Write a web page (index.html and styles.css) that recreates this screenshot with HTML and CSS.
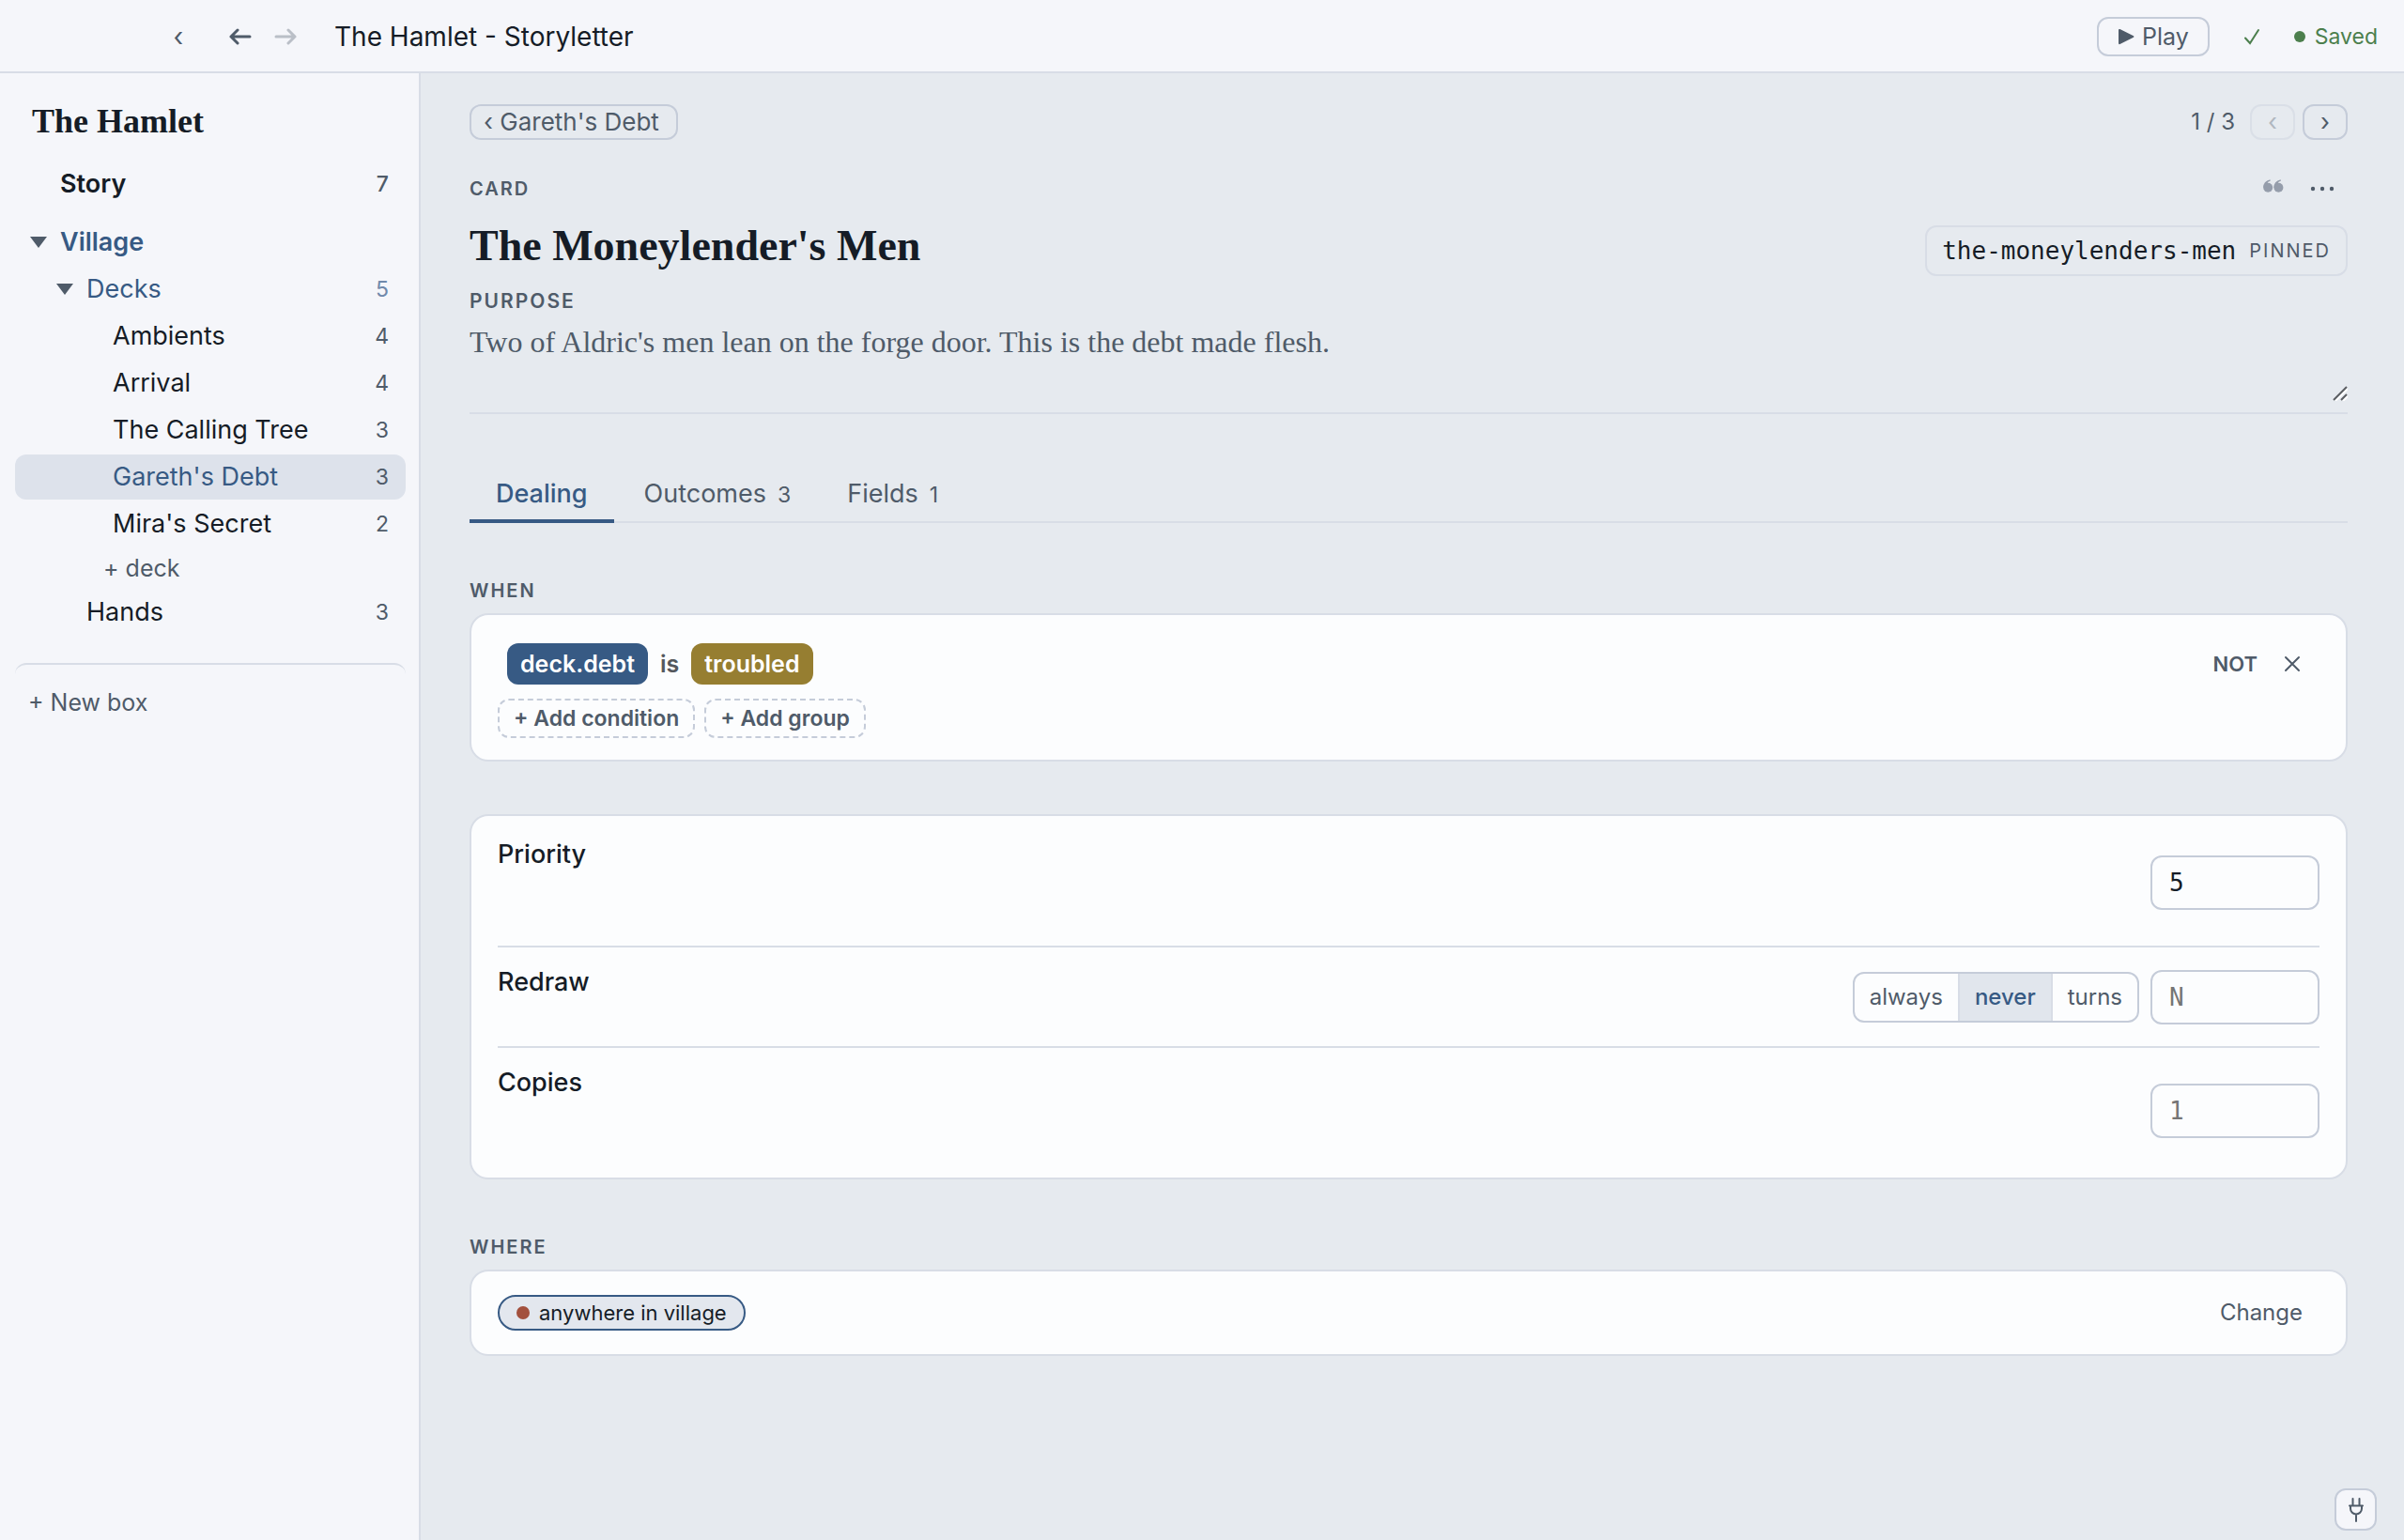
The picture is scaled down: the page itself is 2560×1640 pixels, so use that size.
FILE: index.html
```html
<!DOCTYPE html>
<html lang="en">
<head>
<meta charset="utf-8">
<title>The Hamlet - Storyletter</title>
<meta name="viewport" content="width=device-width, initial-scale=1">
<link rel="stylesheet" href="styles.css">
</head>
<body>
<div class="app">
  <header class="topbar">
    <button class="icon-button collapse" type="button" aria-label="Collapse sidebar">‹</button>
    <button class="icon-button history" type="button" aria-label="Back">
      <svg width="24" height="20" viewBox="0 0 24 20" class="stroke-icon"><path d="M22 10H2M9 3L2 10l7 7"/></svg>
    </button>
    <button class="icon-button history" type="button" aria-label="Forward" disabled>
      <svg width="24" height="20" viewBox="0 0 24 20" class="stroke-icon"><path d="M2 10h20M15 3l7 7-7 7"/></svg>
    </button>
    <span class="window-title">The Hamlet - Storyletter</span>
    <button class="play" type="button">
      <svg width="18" height="18" viewBox="0 0 18 18" fill="currentColor"><path d="M1 2q0-1.500 1.500-1L17 8.200q1 .8 0 1.600L2.500 17Q1 17.500 1 16z"/></svg>
      Play
    </button>
    <svg class="check" width="18" height="18" viewBox="0 0 18 18"><path d="M2 10.500l5 5.500L16 2"/></svg>
    <span class="saved"><span class="saved-dot"></span>Saved</span>
  </header>

  <nav class="sidebar" aria-label="Story outline">
    <h1 class="story-name">The Hamlet</h1>
    <ul class="tree">
      <li><a class="row story" href="#story"><span class="caret-slot"></span><span class="name">Story</span><span class="count">7</span></a></li>
      <li><a class="row box" href="#village"><svg class="caret-slot" width="18" height="14" viewBox="0 0 18 14"><path d="M0 1h18L9 13z"/></svg><span class="name">Village</span></a></li>
      <li><a class="row level-1 open" href="#decks"><svg class="caret-slot" width="18" height="14" viewBox="0 0 18 14"><path d="M0 1h18L9 13z"/></svg><span class="name">Decks</span><span class="count">5</span></a></li>
      <li><a class="row level-2" href="#ambients"><span class="caret-slot"></span><span class="name">Ambients</span><span class="count">4</span></a></li>
      <li><a class="row level-2" href="#arrival"><span class="caret-slot"></span><span class="name">Arrival</span><span class="count">4</span></a></li>
      <li><a class="row level-2" href="#calling-tree"><span class="caret-slot"></span><span class="name">The Calling Tree</span><span class="count">3</span></a></li>
      <li><a class="row level-2 selected" href="#gareths-debt" aria-current="page"><span class="caret-slot"></span><span class="name">Gareth's Debt</span><span class="count">3</span></a></li>
      <li><a class="row level-2" href="#miras-secret"><span class="caret-slot"></span><span class="name">Mira's Secret</span><span class="count">2</span></a></li>
      <li><button class="add-deck" type="button">+ deck</button></li>
      <li><a class="row level-1" href="#hands"><span class="caret-slot"></span><span class="name">Hands</span><span class="count">3</span></a></li>
    </ul>
    <button class="new-box" type="button">+ New box</button>
  </nav>

  <main class="editor">
    <div class="crumbs">
      <a class="back" href="#gareths-debt">‹ Gareth's Debt</a>
      <span class="position">1 / 3</span>
      <button class="step" type="button" aria-label="Previous card" disabled>‹</button>
      <button class="step" type="button" aria-label="Next card">›</button>
    </div>

    <div class="kind">
      <span class="label">Card</span>
      <span class="kind-actions">
        <button class="icon-button quote" type="button" aria-label="Notes">
          <svg width="22" height="20" viewBox="0 0 22 20" fill="currentColor"><circle cx="5.200" cy="8.800" r="5"/><circle cx="16.400" cy="8.800" r="5"/><path d="M.2 9Q0 1.800 7.400.2L7.800 1.600Q4.500 2.600 4.200 5zM11.400 9Q11.200 1.800 18.600.2L19 1.600Q15.700 2.600 15.400 5z"/></svg>
        </button>
        <button class="icon-button" type="button" aria-label="More actions">
          <svg width="26" height="6" viewBox="0 0 26 6" fill="currentColor"><circle cx="3" cy="3" r="2.200"/><circle cx="13" cy="3" r="2.200"/><circle cx="23" cy="3" r="2.200"/></svg>
        </button>
      </span>
    </div>

    <div class="title-row">
      <h2 class="card-title">The Moneylender's Men</h2>
      <div class="slug"><code>the-moneylenders-men</code><span class="pinned">Pinned</span></div>
    </div>

    <div class="purpose">
      <label class="label" for="purpose">Purpose</label>
      <div class="purpose-field">
        <textarea id="purpose" rows="2">Two of Aldric's men lean on the forge door. This is the debt made flesh.</textarea>
        <svg class="grip" width="16" height="16" viewBox="0 0 16 16"><path class="grip-light" d="M3 16L16 3M11 16l5-5"/><path d="M1 15L15 1M9 15l6-6"/></svg>
      </div>
    </div>

    <div class="tabs" role="tablist">
      <button class="tab active" type="button" role="tab" aria-selected="true">Dealing</button>
      <button class="tab" type="button" role="tab" aria-selected="false">Outcomes<span class="tab-count">3</span></button>
      <button class="tab" type="button" role="tab" aria-selected="false">Fields<span class="tab-count">1</span></button>
    </div>

    <section class="section">
      <h3 class="label">When</h3>
      <div class="panel when">
        <div class="condition">
          <button class="chip key" type="button">deck.debt</button>
          <span class="operator">is</span>
          <button class="chip value" type="button">troubled</button>
          <button class="negate" type="button">NOT</button>
          <button class="icon-button remove" type="button" aria-label="Remove condition">
            <svg width="18" height="18" viewBox="0 0 18 18" class="stroke-icon thin"><path d="M2 2l14 14M16 2L2 16"/></svg>
          </button>
        </div>
        <div class="adders">
          <button class="adder" type="button">+ Add condition</button>
          <button class="adder" type="button">+ Add group</button>
        </div>
      </div>
    </section>

    <section class="panel settings">
      <div class="setting tall">
        <label class="setting-name" for="priority">Priority</label>
        <div class="controls"><input id="priority" class="number" type="text" value="5"></div>
      </div>
      <div class="setting">
        <label class="setting-name" for="redraw">Redraw</label>
        <div class="controls">
          <div class="segments" role="group" aria-label="Redraw">
            <button type="button">always</button>
            <button class="on" type="button" aria-pressed="true">never</button>
            <button type="button">turns</button>
          </div>
          <input id="redraw" class="number" type="text" placeholder="N">
        </div>
      </div>
      <div class="setting tall">
        <label class="setting-name" for="copies">Copies</label>
        <div class="controls"><input id="copies" class="number" type="text" placeholder="1"></div>
      </div>
    </section>

    <section class="section">
      <h3 class="label">Where</h3>
      <div class="panel where">
        <span class="place"><span class="place-dot"></span>anywhere in village</span>
        <button class="change" type="button">Change</button>
      </div>
    </section>
  </main>

  <button class="plug" type="button" aria-label="Connections">
    <svg width="16" height="26" viewBox="0 0 16 26" class="stroke-icon"><path d="M4.500 1v7M11.500 1v7M1 8.500h14M2 8.500v3a6 6 0 0 0 12 0v-3M8 17.500V25"/></svg>
  </button>
</div>
</body>
</html>
```

FILE: styles.css
```css
:root {
  --ink: #151c26;
  --muted: #4f5b69;
  --blue: #375a84;
  --surface: #f5f6fa;
  --canvas: #e6eaef;
  --panel: #fcfdfe;
  --line: #d8dde6;
  --line-strong: #c5ccd9;
}

* {
  box-sizing: border-box;
}

body {
  margin: 0;
  background: var(--canvas);
  color: var(--ink);
  font: 26px/32px Inter, "Liberation Sans", sans-serif;
}

button,
input,
textarea {
  margin: 0;
  padding: 0;
  border: 0;
  background: none;
  color: inherit;
  font: inherit;
}

a {
  color: inherit;
  text-decoration: none;
}

.app {
  display: grid;
  grid-template-columns: 448px 1fr;
  grid-template-rows: auto 1fr;
  min-height: 100vh;
}

.stroke-icon {
  fill: none;
  stroke: currentColor;
  stroke-width: 3;
  stroke-linecap: round;
  stroke-linejoin: round;
}

.stroke-icon.thin {
  stroke-width: 2;
}

.icon-button {
  display: flex;
  align-items: center;
  justify-content: center;
  color: var(--muted);
}

/* Top bar */

.topbar {
  grid-column: 1 / -1;
  display: flex;
  align-items: center;
  height: 78px;
  padding: 2px 28px 0 168px;
  background: var(--surface);
  border-bottom: 2px solid var(--line);
}

.collapse {
  width: 44px;
  margin-right: 20px;
  font-size: 28px;
}

.history {
  width: 48px;
}

.history:disabled {
  opacity: 0.35;
}

.window-title {
  margin-left: 28px;
  font-size: 28px;
}

.play {
  display: flex;
  align-items: center;
  gap: 8px;
  height: 42px;
  margin-left: auto;
  padding: 0 20px;
  border: 2px solid var(--line-strong);
  border-radius: 12px;
  color: var(--muted);
  font-size: 25px;
}

.check {
  margin: 0 36px;
  fill: none;
  stroke: #4c7f4d;
  stroke-width: 2;
  stroke-linecap: round;
}

.saved {
  display: flex;
  align-items: center;
  gap: 10px;
  color: #4c7f4d;
  font-size: 23px;
}

.saved-dot {
  width: 12px;
  height: 12px;
  border-radius: 50%;
  background: #4c7f4d;
}

/* Sidebar */

.sidebar {
  padding: 30px 14px 32px 16px;
  background: var(--surface);
  border-right: 2px solid var(--line);
}

.story-name {
  margin: 0 0 22px;
  padding-left: 18px;
  font: bold 36px/42px "Liberation Serif", serif;
}

.tree {
  display: flex;
  flex-direction: column;
  gap: 2px;
  margin: 0;
  padding: 0;
  list-style: none;
}

.row {
  display: flex;
  align-items: center;
  height: 48px;
  padding: 0 18px 0 16px;
  border-radius: 12px;
  font-size: 27px;
}

.caret-slot {
  width: 18px;
  margin-right: 14px;
  fill: var(--muted);
}

.name {
  flex: 1;
}

.count {
  color: var(--muted);
  font-size: 23px;
}

.story {
  margin-bottom: 12px;
  font-weight: 600;
}

.story .count {
  font-weight: 500;
}

.box {
  color: var(--blue);
  font-weight: 600;
}

.level-1 {
  padding-left: 44px;
}

.level-2 {
  padding-left: 72px;
}

.open {
  color: var(--blue);
}

.open .count {
  color: #7089ab;
}

.selected {
  background: #dde2eb;
  color: var(--blue);
}

.add-deck {
  display: block;
  height: 42px;
  padding-left: 94px;
  color: var(--muted);
  font-size: 25px;
}

.new-box {
  width: 100%;
  height: 78px;
  margin-top: 30px;
  padding: 4px 14px 0;
  border-top: 2px solid var(--line);
  border-radius: 12px;
  color: var(--muted);
  font-size: 25px;
  text-align: left;
}

/* Card editor */

.editor {
  padding: 33px 60px 60px 52px;
}

.label {
  margin: 0;
  color: var(--muted);
  font-size: 20px;
  font-weight: 600;
  line-height: 24px;
  letter-spacing: 2px;
  text-transform: uppercase;
}

.crumbs {
  display: flex;
  align-items: center;
  gap: 8px;
}

.back {
  margin-right: auto;
  padding: 1px 18px 1px 13px;
  border: 2px solid var(--line-strong);
  border-radius: 12px;
  color: var(--muted);
}

.position {
  margin-right: 8px;
  color: var(--muted);
  font-size: 24px;
}

.step {
  width: 48px;
  height: 38px;
  border: 2px solid var(--line-strong);
  border-radius: 12px;
  color: var(--muted);
  line-height: 30px;
}

.step:disabled {
  opacity: 0.35;
}

.kind {
  display: flex;
  align-items: center;
  justify-content: space-between;
  height: 48px;
  margin-top: 28px;
}

.kind-actions {
  display: flex;
  align-items: center;
  gap: 28px;
  padding-right: 14px;
}

.quote {
  color: #959dab;
}

.title-row {
  display: flex;
  align-items: flex-start;
  justify-content: space-between;
  margin-top: 15px;
}

.card-title {
  margin: 0;
  font: bold 46px/44px "Liberation Serif", serif;
}

.slug {
  display: flex;
  align-items: center;
  gap: 14px;
  height: 54px;
  padding: 0 16px;
  border: 2px solid var(--line);
  border-radius: 12px;
}

.slug code {
  font: 26px/32px "DejaVu Sans Mono", monospace;
}

.pinned {
  color: var(--muted);
  font-size: 20px;
  letter-spacing: 2px;
  text-transform: uppercase;
}

.purpose {
  margin-top: 15px;
  border-bottom: 2px solid var(--line);
}

.purpose .label {
  display: block;
  font-size: 21px;
}

.purpose-field {
  position: relative;
  padding-bottom: 10px;
}

.purpose textarea {
  display: block;
  width: 100%;
  height: 96px;
  padding-top: 11px;
  color: var(--muted);
  font: 32px/40px "Liberation Serif", serif;
  resize: none;
  outline: 0;
}

.grip {
  position: absolute;
  right: 0;
  bottom: 12px;
  fill: none;
  stroke: #5c5f63;
  stroke-width: 2;
}

.grip-light {
  stroke: #ffffff;
}

.tabs {
  display: flex;
  gap: 4px;
  margin-top: 52px;
  border-bottom: 2px solid var(--line);
}

.tab {
  height: 64px;
  margin-bottom: -2px;
  padding: 6px 28px 0;
  border-bottom: 4px solid transparent;
  color: var(--muted);
  font-size: 27px;
}

.tab.active {
  border-color: var(--blue);
  color: var(--blue);
  font-weight: 500;
}

.tab-count {
  margin-left: 12px;
  font-size: 23px;
}

.section {
  margin-top: 60px;
}

.section .label {
  margin-bottom: 12px;
}

.panel {
  border: 2px solid var(--line);
  border-radius: 20px;
  background: var(--panel);
}

.when {
  padding: 30px 28px 23px;
}

.condition {
  display: flex;
  align-items: center;
  padding: 0 20px 0 10px;
}

.chip {
  height: 44px;
  padding: 0 14px;
  border-radius: 12px;
  color: #ffffff;
  font-size: 25px;
  font-weight: 600;
}

.chip.key {
  background: var(--blue);
}

.chip.value {
  background: #967e31;
}

.operator {
  margin: 0 13px;
  color: #54585d;
  font-size: 25px;
  font-weight: 600;
}

.negate {
  margin-left: auto;
  color: var(--muted);
  font-size: 22px;
  font-weight: 600;
}

.remove {
  margin-left: 28px;
}

.adders {
  display: flex;
  gap: 10px;
  margin-top: 15px;
}

.adder {
  height: 42px;
  padding: 0 15px;
  border: 2px dashed var(--line-strong);
  border-radius: 12px;
  color: var(--muted);
  font-size: 23px;
  font-weight: 600;
}

.settings {
  margin-top: 56px;
  padding: 4px 28px;
}

.setting {
  display: flex;
  justify-content: space-between;
  min-height: 107px;
  padding: 21px 0;
  border-bottom: 2px solid var(--line);
}

.setting.tall {
  min-height: 136px;
}

.setting:last-child {
  min-height: 134px;
  border-bottom: 0;
}

.setting-name {
  font-size: 27px;
  font-weight: 500;
}

.controls {
  display: flex;
  align-items: center;
  gap: 12px;
}

.number {
  width: 180px;
  height: 58px;
  padding: 0 18px;
  border: 2px solid var(--line-strong);
  border-radius: 12px;
  font: 26px/32px "DejaVu Sans Mono", monospace;
}

.number::placeholder {
  color: #757575;
}

.segments {
  display: flex;
  height: 54px;
  overflow: hidden;
  border: 2px solid var(--line-strong);
  border-radius: 12px;
}

.segments button {
  padding: 0 16px;
  color: var(--muted);
  font-size: 24px;
}

.segments button + button {
  border-left: 2px solid var(--line);
}

.segments .on {
  background: #e1e6ed;
  color: var(--blue);
  font-weight: 500;
}

.where {
  display: flex;
  align-items: center;
  justify-content: space-between;
  height: 92px;
  padding: 0 46px 0 28px;
}

.place {
  display: flex;
  align-items: center;
  gap: 10px;
  height: 38px;
  padding: 0 18px;
  border: 2px solid var(--blue);
  border-radius: 20px;
  background: #e3e7ee;
  font-size: 22px;
}

.place-dot {
  width: 14px;
  height: 14px;
  border-radius: 50%;
  background: #a3503d;
}

.change {
  color: var(--muted);
  font-size: 24px;
}

.plug {
  position: fixed;
  right: 29px;
  bottom: 10px;
  display: flex;
  align-items: center;
  justify-content: center;
  width: 45px;
  height: 45px;
  border: 2px solid var(--line-strong);
  border-radius: 12px;
  background: var(--surface);
  color: var(--muted);
}

.plug .stroke-icon {
  stroke-width: 2;
}
```
